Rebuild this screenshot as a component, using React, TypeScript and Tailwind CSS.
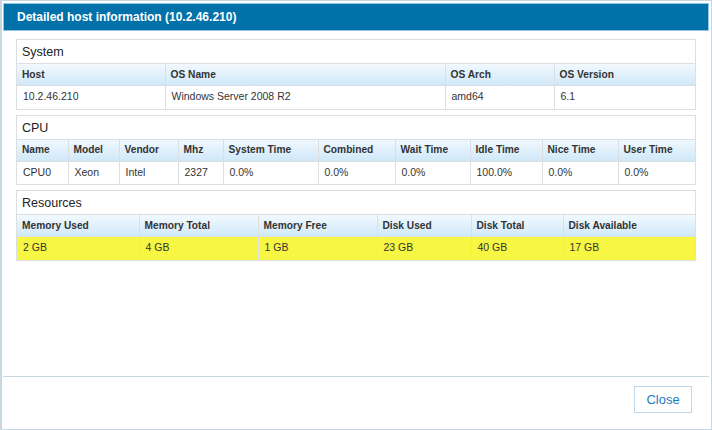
import React from "react";

type Section = {
  title: string;
  widths: number[];
  headers: string[];
  row: string[];
  highlight?: boolean;
};

const sections: Section[] = [
  {
    title: "System",
    widths: [148, 280, 109, 141],
    headers: ["Host", "OS Name", "OS Arch", "OS Version"],
    row: ["10.2.46.210", "Windows Server 2008 R2", "amd64", "6.1"],
  },
  {
    title: "CPU",
    widths: [51, 51, 59, 45, 95, 77, 75, 72, 76, 77],
    headers: ["Name", "Model", "Vendor", "Mhz", "System Time", "Combined", "Wait Time", "Idle Time", "Nice Time", "User Time"],
    row: ["CPU0", "Xeon", "Intel", "2327", "0.0%", "0.0%", "0.0%", "100.0%", "0.0%", "0.0%"],
  },
  {
    title: "Resources",
    widths: [122, 119, 119, 94, 92, 132],
    headers: ["Memory Used", "Memory Total", "Memory Free", "Disk Used", "Disk Total", "Disk Available"],
    row: ["2 GB", "4 GB", "1 GB", "23 GB", "40 GB", "17 GB"],
    highlight: true,
  },
];

function Panel({ s }: { s: Section }) {
  return (
    <div className="border border-[#dcdfe2] bg-white">
      <div className="h-[23px] pl-[5px] pt-[2px] flex items-center text-[12.5px] text-[#222]">{s.title}</div>
      <table className="table-fixed border-collapse w-full">
        <colgroup>
          {s.widths.map((w, i) => (
            <col key={i} style={{ width: w }} />
          ))}
        </colgroup>
        <thead>
          <tr className="h-[22px] bg-gradient-to-b from-[#f2f9fe] to-[#cfe8f9]">
            {s.headers.map((h, i) => (
              <th
                key={h}
                className={`text-left font-bold text-[10.2px] text-[#333] pl-[5px] border-t border-[#dcdfe2] ${i > 0 ? "border-l" : ""}`}
              >
                {h}
              </th>
            ))}
          </tr>
        </thead>
        <tbody>
          <tr className={`h-[23px] ${s.highlight ? "bg-[#f7f743]" : "bg-white"}`}>
            {s.row.map((c, i) => (
              <td
                key={i}
                className={`text-[10.5px] text-[#333] pl-[6px] border-t border-[#dcdfe2] ${i > 0 ? "border-l" : ""}`}
              >
                {c}
              </td>
            ))}
          </tr>
        </tbody>
      </table>
    </div>
  );
}

export default function App() {
  return (
    <div
      className="w-[712px] h-[430px] bg-white border border-[#c9d7e1] border-l-2 flex flex-col p-[2px] pl-[1px]"
      style={{ fontFamily: '"Liberation Sans", Arial, sans-serif' }}
    >
      <div className="h-[28px] bg-[#0071a9] border border-[#8fc6e8] flex items-center pl-[13px] text-white font-bold text-[12px]">
        Detailed host information (10.2.46.210)
      </div>
      <div className="flex-1 flex flex-col gap-[5px] px-[13px] pt-[8px]">
        {sections.map((s) => (
          <Panel key={s.title} s={s} />
        ))}
      </div>
      <div className="h-[51px] border-t border-[#c9d7e1] flex items-start justify-end pt-[9px] pr-[17px]">
        <button className="w-[58px] h-[27px] border border-[#bcd9ec] bg-white text-[#1a7cc0] text-[13px]">
          Close
        </button>
      </div>
    </div>
  );
}
